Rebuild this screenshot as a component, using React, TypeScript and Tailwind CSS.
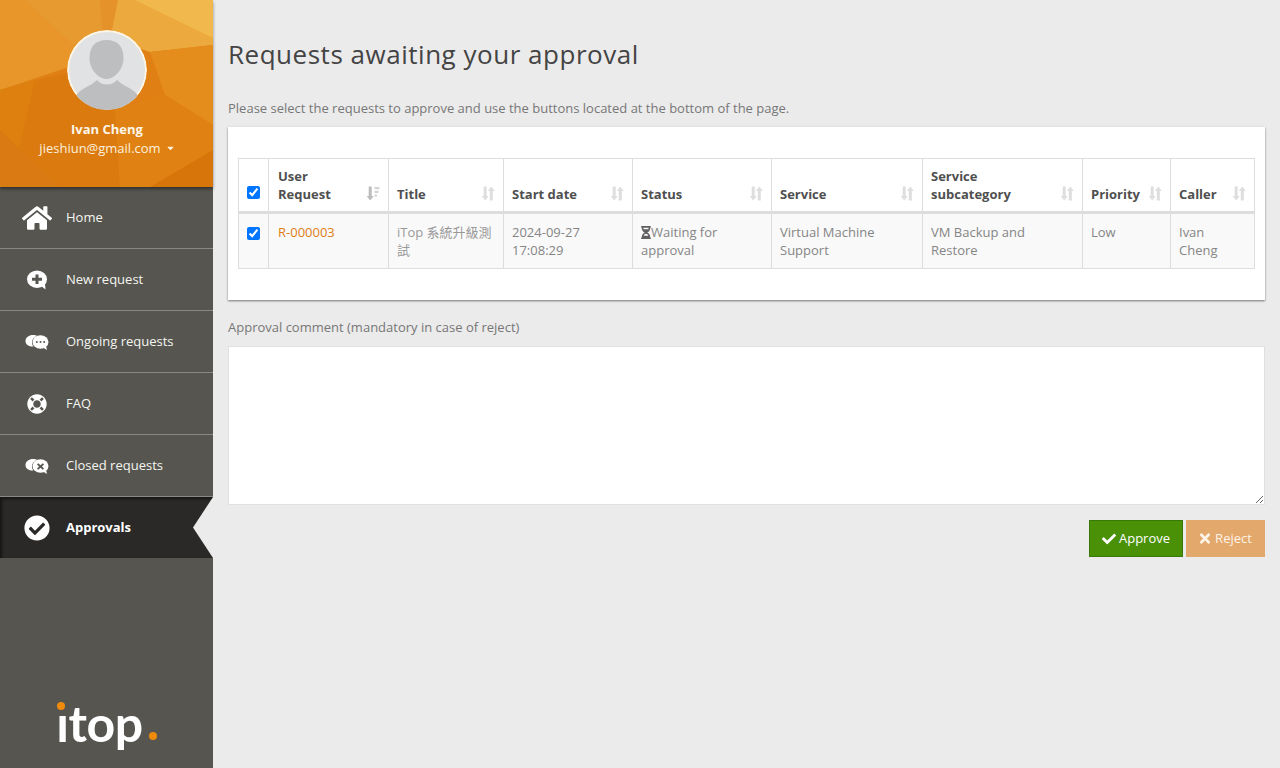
import type { ReactNode } from 'react'
import { FaCheck, FaCheckCircle, FaHome, FaHourglassHalf, FaLifeRing, FaTimes, FaCaretDown } from 'react-icons/fa'

const PolyBackground = () => (
  <svg className="absolute inset-0 h-full w-full" viewBox="0 0 213 187" preserveAspectRatio="none" aria-hidden>
    <rect width="213" height="187" fill="#e08014" />
    <polygon points="0,0 118,0 100,35 70,60 0,85" fill="#e79a30" />
    <polygon points="0,0 25,0 90,60 0,90" fill="#e8962a" />
    <polygon points="118,0 213,0 213,45 150,52 100,35" fill="#eca93d" />
    <polygon points="135,0 213,0 213,38" fill="#f1b94d" />
    <polygon points="100,0 118,0 112,30 102,30" fill="#e6922a" />
    <polygon points="150,52 213,45 213,125 165,95" fill="#e48c1c" />
    <polygon points="0,90 70,72 115,110 120,187 0,187" fill="#da7a0f" />
    <polygon points="0,90 35,80 10,187 0,187" fill="#dd800f" />
    <polygon points="115,110 165,95 213,125 213,150 150,187 120,187" fill="#df8213" />
    <polygon points="150,187 213,150 213,187" fill="#d8750a" />
    <polygon points="0,130 60,187 0,187" fill="#d97a12" />
  </svg>
)

const Avatar = () => (
  <svg viewBox="0 0 80 80" className="h-20 w-20 rounded-full" aria-hidden>
    <circle cx="40" cy="40" r="40" fill="#fdf6e6" />
    <circle cx="40" cy="40" r="38" fill="#e1e2e3" />
    <path d="M22.500 28C22.500 16 29 10 39.500 10S56.500 16 56.500 28C56.500 40 47 49 39.500 49S22.500 40 22.500 28Z" fill="#bdbebf" />
    <path d="M10 64 C15 58 24 56 30 50 C35 56 45 56 50 50 C56 56 65 58 70 64 L70 80 L10 80Z" fill="#bdbebf" />
  </svg>
)

const NewRequestIcon = () => (
  <svg viewBox="0 0 22 20" className="h-5 w-[22px]" aria-hidden>
    <ellipse cx="11" cy="9.200" rx="10" ry="8.700" fill="#fff" />
    <path d="M14.500 15.500 19.500 19.500 19 13.500Z" fill="#fff" />
    <path d="M9.500 4.500h3v3.200H16v3h-3.500V14h-3v-3.300H6v-3h3.500Z" fill="#565550" />
  </svg>
)

const ChatPair = ({ closed }: { closed?: boolean }) => (
  <svg viewBox="0 0 26 16" className="h-4 w-[26px]" aria-hidden>
    <path d="M9 1c2 0 3 .4 4 1-3 1-5 3.500-5 6.500 0 1.500.5 3 1.500 4-3 .5-8-1-8-5.500C1.500 3.500 5 1 9 1Z" fill="#fff" />
    <ellipse cx="16.500" cy="8" rx="8" ry="6.800" fill="#fff" />
    <path d="M19 13.500 23 16 22 12Z" fill="#fff" />
    {closed ? (
      <path d="M14.200 5.200 16.500 7.200 18.800 5.200 20 6.500 17.900 8.500 20 10.500 18.800 11.800 16.500 9.800 14.200 11.800 13 10.500 15.100 8.500 13 6.500Z" fill="#565550" />
    ) : (
      <>
        <circle cx="12.800" cy="8" r="1" fill="#565550" />
        <circle cx="16.500" cy="8" r="1" fill="#565550" />
        <circle cx="20.200" cy="8" r="1" fill="#565550" />
      </>
    )}
  </svg>
)

const SortIcon = ({ dark }: { dark?: boolean }) => (
  <svg viewBox="0 0 14 15" className="h-[15px] w-[14px] shrink-0" aria-hidden>
    <path d="M2.700 0.500h3v9.500h2L4.200 14.500 0.700 10h2Z" fill={dark ? '#bcbcbc' : '#dedede'} />
    {dark ? (
      <path d="M8.500 1h5v2.200h-5ZM8.500 4.700h4v2.200h-4ZM8.500 8.400h2.500v2.200H8.500Z" fill="#d4d4d4" />
    ) : (
      <path d="M8.800 14.500h3V5h2L10.300 0.500 6.800 5h2Z" fill="#dedede" />
    )}
  </svg>
)

const navItems: { label: string; icon: ReactNode }[] = [
  { label: 'Home', icon: <FaHome className="h-[30px] w-[30px] shrink-0 text-white" /> },
  { label: 'New request', icon: <NewRequestIcon /> },
  { label: 'Ongoing requests', icon: <ChatPair /> },
  { label: 'FAQ', icon: <FaLifeRing className="h-5 w-5 text-white" /> },
  { label: 'Closed requests', icon: <ChatPair closed /> },
]

const columns = [
  { title: ['User', 'Request'], sorted: true },
  { title: ['Title'] },
  { title: ['Start date'] },
  { title: ['Status'] },
  { title: ['Service'] },
  { title: ['Service', 'subcategory'] },
  { title: ['Priority'] },
  { title: ['Caller'] },
]

const Sidebar = () => (
  <aside className="flex h-screen w-[213px] shrink-0 flex-col bg-[#565550]">
    <div className="relative z-10 flex h-[187px] shrink-0 flex-col items-center shadow-[0_2px_3px_rgba(0,0,0,0.45)]">
      <PolyBackground />
      <div className="relative flex flex-col items-center pt-[30px] pl-[1px]">
        <Avatar />
        <div className="mt-[10px] text-[13px] leading-[18px] font-bold text-[#fdf6e9]">Ivan Cheng</div>
        <div className="flex items-center gap-[5px] text-[13px] leading-[20px] text-[#fdf1dd]">
          jieshiun@gmail.com
          <FaCaretDown className="h-[10px] w-[9px]" />
        </div>
      </div>
    </div>
    <nav className="flex flex-col">
      {navItems.map((item) => (
        <div key={item.label} className="flex h-[62px] items-center border-b border-[#8a8985]">
          <div className="mr-[14px] ml-[22px] flex w-[30px] shrink-0 justify-center">{item.icon}</div>
          <span className="text-[13px] text-[#f5f5f0]">{item.label}</span>
        </div>
      ))}
      <div className="relative flex h-[61px] items-center bg-[#2a2927] shadow-[inset_2px_2px_3px_rgba(0,0,0,0.5)]">
        <div className="mr-[14px] ml-[22px] flex w-[30px] shrink-0 justify-center">
          <FaCheckCircle className="h-[26px] w-[26px] text-white" />
        </div>
        <span className="text-[13px] font-bold text-white">Approvals</span>
        <div className="absolute top-0 right-0 h-full w-[20px] bg-[#ebebeb] [clip-path:polygon(100%_0,100%_100%,0_50%)]" />
      </div>
    </nav>
    <div className="flex flex-1 items-end justify-center pb-[17px]">
      <div className="relative flex items-baseline font-['Lato',sans-serif] text-[50px] leading-[56px] font-bold tracking-[-0.5px] text-white">
        ıtop
        <span className="absolute top-[7px] left-[1px] h-2 w-2 rounded-full bg-[#ef8b0c]" />
        <span className="ml-[6px] h-2 w-2 -translate-y-[2px] rounded-full bg-[#ef8b0c]" />
      </div>
    </div>
  </aside>
)

const ApprovalTable = () => (
  <table className="w-[1016px] table-fixed border-collapse text-[13px] leading-[18px]">
    <colgroup>
      <col className="w-[30px]" />
      <col className="w-[120px]" />
      <col className="w-[115px]" />
      <col className="w-[129px]" />
      <col className="w-[139px]" />
      <col className="w-[151px]" />
      <col className="w-[160px]" />
      <col className="w-[88px]" />
      <col className="w-[84px]" />
    </colgroup>
    <thead>
      <tr className="text-[#4f4f4f]">
        <th className="border border-b-[3px] border-[#dddddd] px-2 pt-[8px] pb-[8px] align-bottom">
          <input type="checkbox" checked readOnly className="mb-[4px] block h-[13px] w-[13px]" />
        </th>
        {columns.map((col) => (
          <th key={col.title.join(' ')} className="border border-b-[3px] border-[#dddddd] px-2 pt-[8px] pb-[8px] text-left align-bottom font-bold">
            <div className={col.sorted ? 'flex items-end justify-between pl-[1px]' : 'flex items-end justify-between'}>
              <span>
                {col.title.map((line) => (
                  <span key={line} className="block">
                    {line}
                  </span>
                ))}
              </span>
              <span className="pb-[2px]">
                <SortIcon dark={col.sorted} />
              </span>
            </div>
          </th>
        ))}
      </tr>
    </thead>
    <tbody>
      <tr className="bg-[#f9f9f9] text-[#858585]">
        <td className="border border-[#dddddd] px-2 py-[9px] align-top">
          <input type="checkbox" checked readOnly className="mt-[4px] block h-[13px] w-[13px]" />
        </td>
        <td className="border border-[#dddddd] py-[9px] pr-2 pl-[9px] align-top text-[#de7d16]">R-000003</td>
        <td className="border border-[#dddddd] px-2 py-[9px] align-top font-['Open_Sans','Noto_Sans_CJK_TC',sans-serif] text-[#999999]">iTop 系統升級測試</td>
        <td className="border border-[#dddddd] px-2 py-[9px] align-top">
          2024-09-27
          <br />
          17:08:29
        </td>
        <td className="border border-[#dddddd] px-2 py-[9px] align-top">
          <FaHourglassHalf className="inline h-[13px] w-[10px] align-[-2px] text-[#5f5f5f]" />
          Waiting for approval
        </td>
        <td className="border border-[#dddddd] px-2 py-[9px] align-top">Virtual Machine Support</td>
        <td className="border border-[#dddddd] px-2 py-[9px] align-top">VM Backup and Restore</td>
        <td className="border border-[#dddddd] px-2 py-[9px] align-top">Low</td>
        <td className="border border-[#dddddd] px-2 py-[9px] align-top">
          Ivan
          <br />
          Cheng
        </td>
      </tr>
    </tbody>
  </table>
)

export default function App() {
  return (
    <div className="flex h-screen overflow-hidden bg-[#ebebeb] font-['Open_Sans',sans-serif]">
      <Sidebar />
      <main className="flex min-w-0 flex-1 flex-col px-[15px]">
        <h1 className="mt-[35px] text-[26px] leading-[38px] font-normal tracking-[0.52px] text-[#444444]">Requests awaiting your approval</h1>
        <p className="mt-[26px] text-[13px] leading-[18px] text-[#777777]">Please select the requests to approve and use the buttons located at the bottom of the page.</p>
        <section className="mt-[10px] h-[173px] bg-white px-[10px] pt-[31px] shadow-[0_1px_2px_rgba(0,0,0,0.5)]">
          <ApprovalTable />
        </section>
        <label className="mt-[18px] text-[13px] leading-[18px] text-[#777777]">Approval comment (mandatory in case of reject)</label>
        <textarea className="mt-[10px] block h-[159px] w-full border border-[#e0e0e0] bg-white" />
        <div className="mt-[15px] flex justify-end gap-[3px]">
          <button type="button" className="flex h-[37px] w-[94px] items-center justify-center gap-[3px] border border-[#3a7a08] bg-[#4a9108] text-[13px] text-white">
            <FaCheck className="h-[14px] w-[14px]" />
            Approve
          </button>
          <button type="button" className="flex h-[37px] w-[79px] items-center justify-center gap-[4px] bg-[#e3a86c] text-[13px] text-[#fdf3e7]">
            <FaTimes className="h-[15px] w-[12px]" />
            Reject
          </button>
        </div>
      </main>
    </div>
  )
}
